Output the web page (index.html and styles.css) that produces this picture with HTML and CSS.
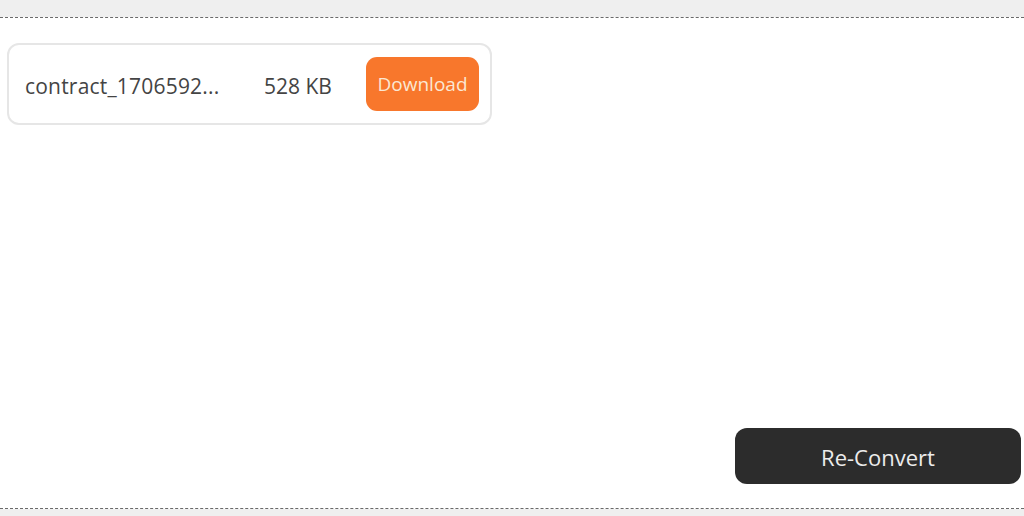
FILE: index.html
```html
<!DOCTYPE html>
<html lang="en">
<head>
<meta charset="utf-8">
<title>Converted files</title>
<link rel="stylesheet" href="styles.css">
</head>
<body>
  <div class="top-gap"></div>
  <section class="panel">
    <div class="file-card">
      <span class="file-name">contract_1706592...</span>
      <span class="file-size">528 KB</span>
      <button class="btn-download">Download</button>
    </div>
    <div class="actions">
      <button class="btn-reconvert">Re-Convert</button>
    </div>
  </section>
</body>
</html>
```

FILE: styles.css
```css
html, body {
  margin: 0;
  padding: 0;
}
body {
  background: #efefef;
  font-family: "Open Sans", "Noto Sans", "Liberation Sans", sans-serif;
  width: 1024px;
  height: 516px;
  overflow: hidden;
}
.top-gap {
  height: 17px;
}
.panel {
  background: #ffffff;
  border-top: 1px dashed #6a6a6a;
  border-bottom: 1px dashed #6a6a6a;
  height: 492px;
  box-sizing: border-box;
  padding: 25px 3px 24px 7px;
  display: flex;
  flex-direction: column;
}
.file-card {
  width: 485px;
  height: 82px;
  box-sizing: border-box;
  border: 2px solid #e6e6e6;
  border-radius: 12px;
  display: flex;
  align-items: center;
  padding: 12px 11px 12px 16px;
}
.file-name {
  width: 239px;
  font-size: 21px;
  line-height: 28px;
  padding-top: 3px;
  color: #444444;
  letter-spacing: 0.2px;
  white-space: nowrap;
}
.file-size {
  width: 102px;
  font-size: 21px;
  line-height: 28px;
  padding-top: 3px;
  color: #444444;
}
.btn-download {
  margin-left: auto;
  width: 113px;
  height: 54px;
  border: none;
  border-radius: 11px;
  background: #f8772c;
  color: #fbe7d3;
  font-family: inherit;
  font-size: 19px;
  padding: 0;
}
.actions {
  margin-top: auto;
  display: flex;
  justify-content: flex-end;
}
.btn-reconvert {
  width: 286px;
  height: 56px;
  border: none;
  border-radius: 12px;
  background: #2c2c2c;
  color: #ececec;
  font-family: inherit;
  font-size: 22px;
  padding: 2px 0 0;
}
```
